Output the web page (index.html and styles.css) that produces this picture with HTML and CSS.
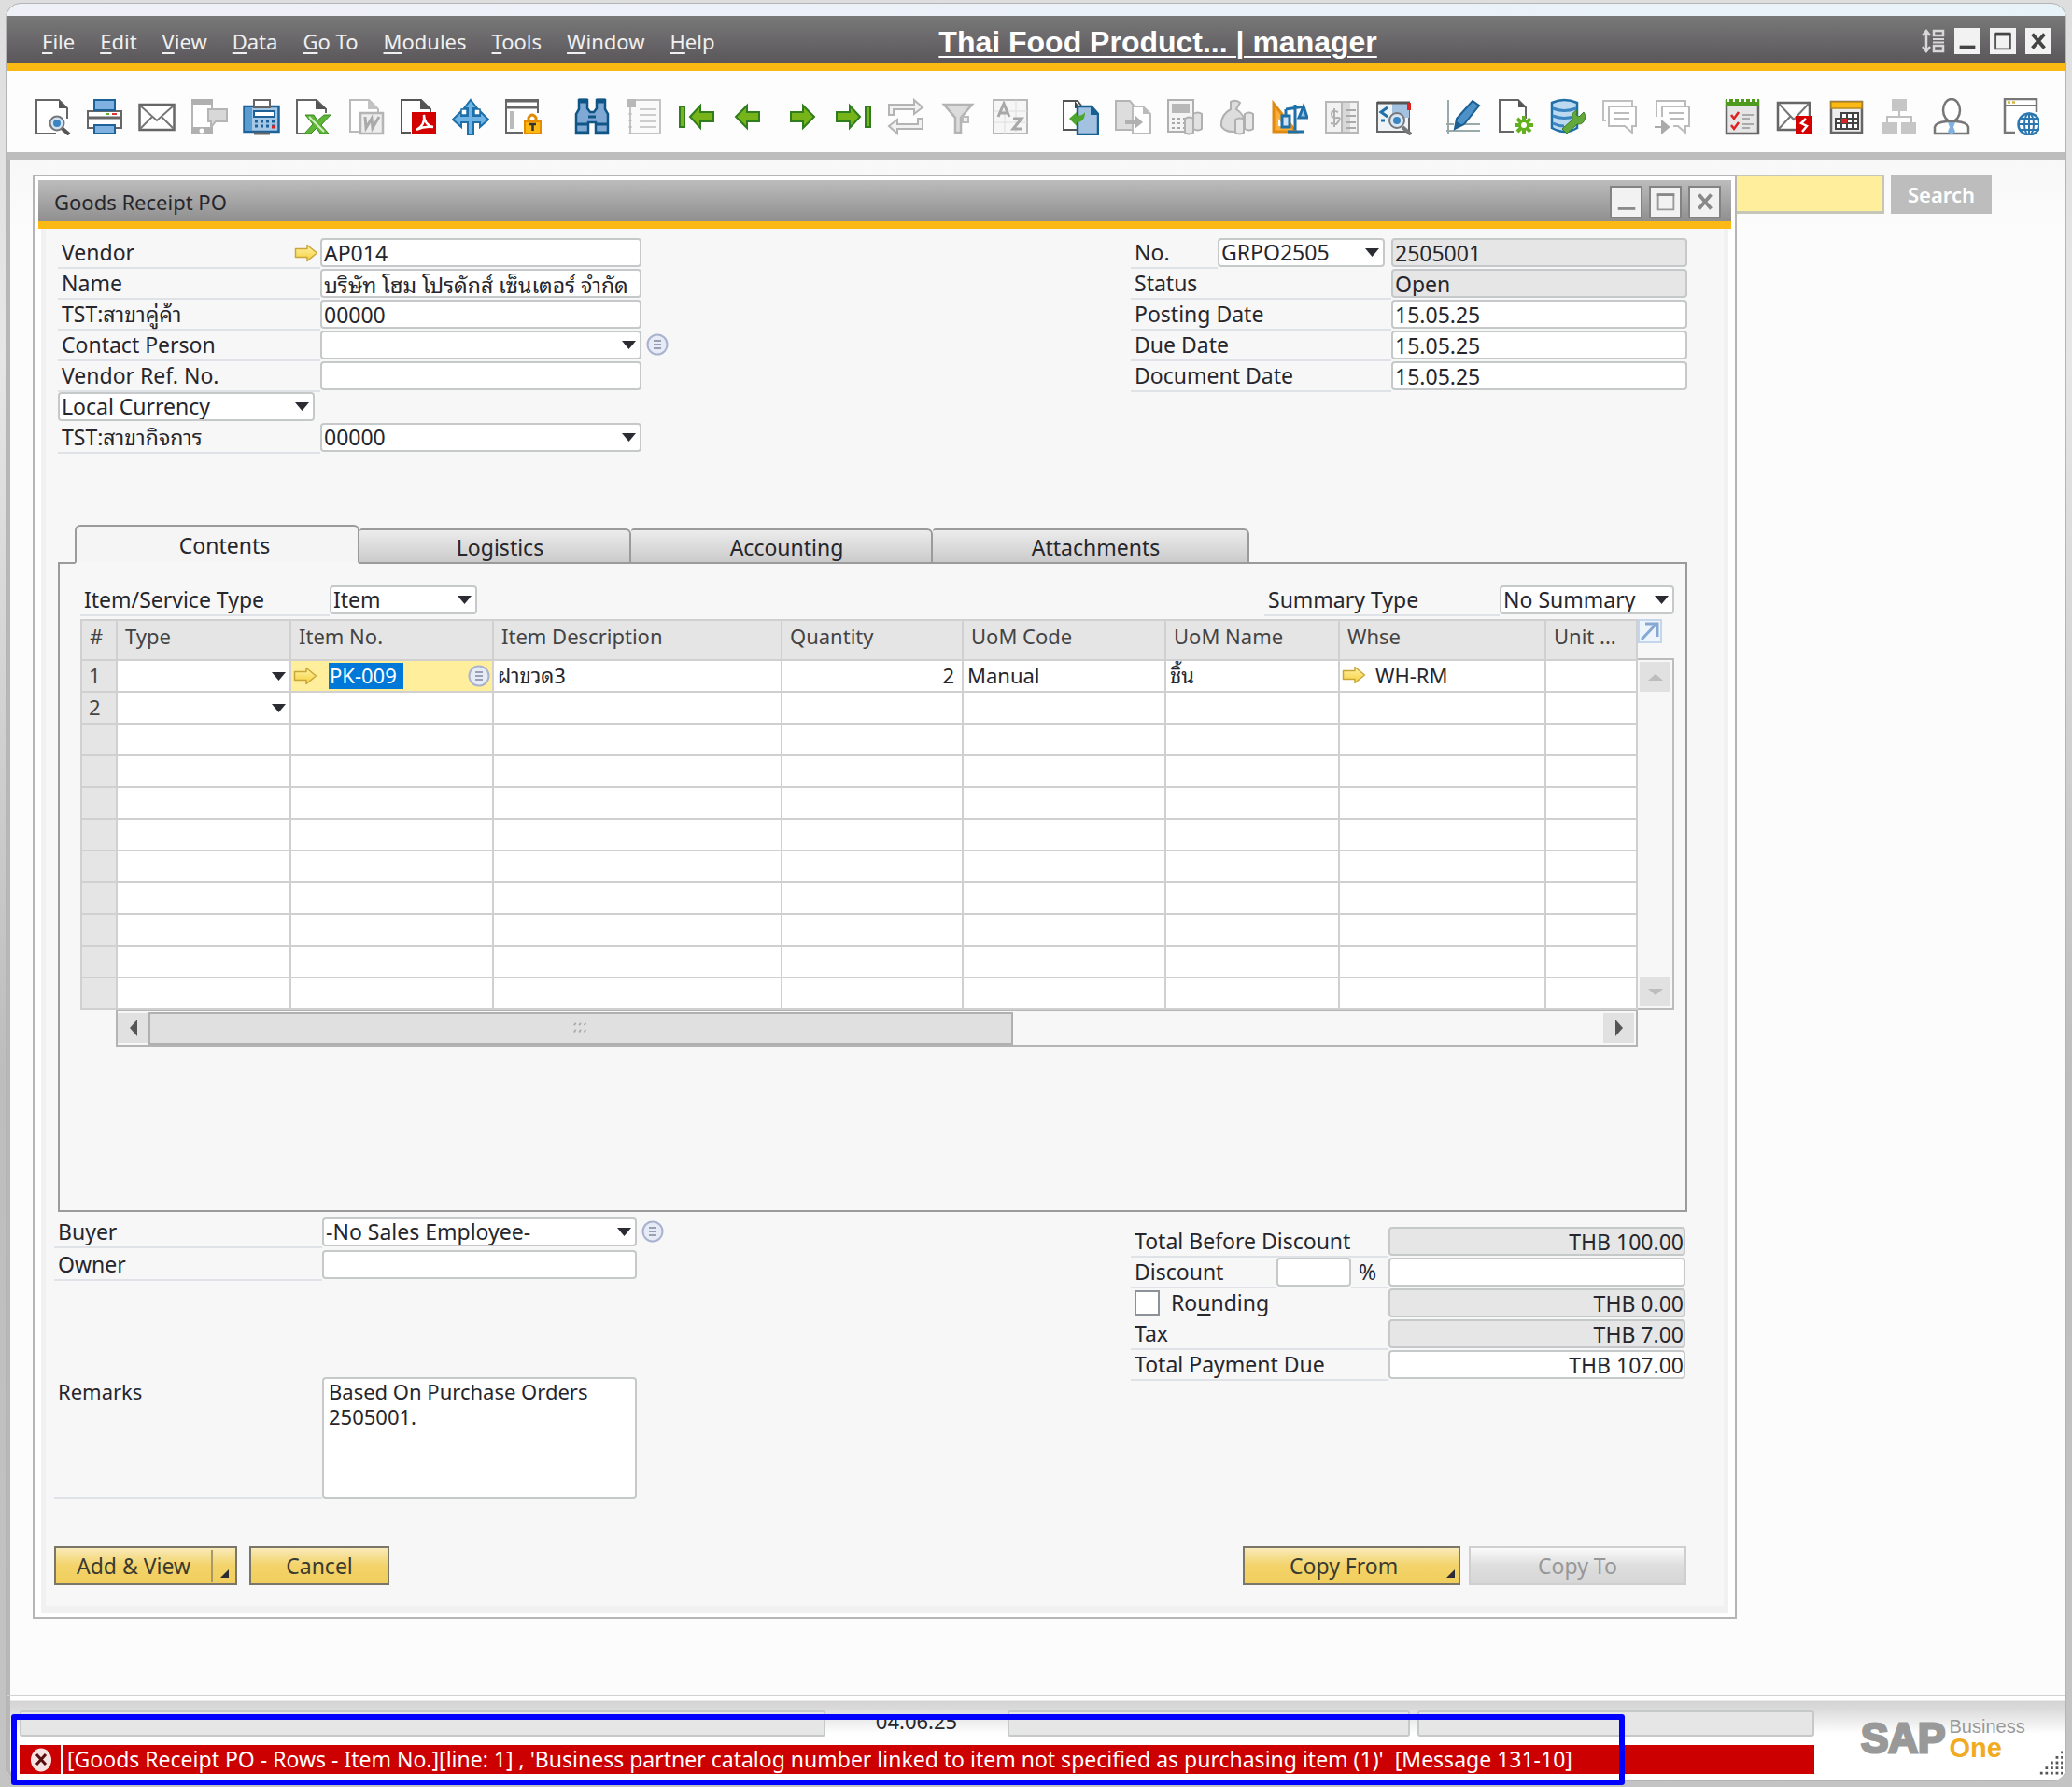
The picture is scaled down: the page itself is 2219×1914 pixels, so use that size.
FILE: index.html
```html
<!DOCTYPE html>
<html lang="en">
<head>
<meta charset="utf-8">
<title>Goods Receipt PO</title>
<link rel="stylesheet" href="styles.css">
</head>
<body>
<svg class="defs" aria-hidden="true">
  <defs>
    <linearGradient id="gold" x1="0" y1="0" x2="0" y2="1"><stop offset="0" stop-color="#fff3a8"/><stop offset="1" stop-color="#f5cf3a"/></linearGradient>
    <symbol id="link-arrow" viewBox="0 0 26 20"><path d="M1.500 5.500H14V1.500L24.500 10 14 18.500V14.500H1.500z" fill="url(#gold)" stroke="#c9a63a" stroke-width="1.500" stroke-linejoin="round"/></symbol>
    <symbol id="list-dot" viewBox="0 0 24 24"><circle cx="12" cy="12" r="10.500" fill="#e6ebf6" stroke="#a9b3cf" stroke-width="2"/><path d="M8 8h8M8 12h8M8 16h8" stroke="#8088a0" stroke-width="1.600"/></symbol>
  </defs>
</svg>
<div class="app">
  <header class="menubar">
    <nav class="menu">
      <a href="#"><u>F</u>ile</a><a href="#"><u>E</u>dit</a><a href="#"><u>V</u>iew</a><a href="#"><u>D</u>ata</a><a href="#"><u>G</u>o To</a><a href="#"><u>M</u>odules</a><a href="#"><u>T</u>ools</a><a href="#"><u>W</u>indow</a><a href="#"><u>H</u>elp</a>
    </nav>
    <h1 class="company">Thai Food Product... | manager</h1>
    <div class="win-buttons">
      <svg class="fit" viewBox="0 0 26 26"><path d="M6 3v20M2 7l4-5 4 5M2 19l4 5 4-5" fill="none" stroke="#d8d8d8" stroke-width="2.500"/><path d="M14 2h10v5H14zM14 18h10v6H14z" fill="none" stroke="#d8d8d8" stroke-width="2.500"/><path d="M13 11h12M13 14.500h12" stroke="#d8d8d8" stroke-width="2"/></svg>
      <button class="win main" aria-label="Minimize"><svg viewBox="0 0 28 28"><path d="M5 21h18" stroke="#444" stroke-width="4"/></svg></button>
      <button class="win main" aria-label="Maximize"><svg viewBox="0 0 28 28"><path d="M5.500 6h17v17h-17z" fill="none" stroke="#555" stroke-width="2"/><path d="M5 6h18" stroke="#444" stroke-width="4"/></svg></button>
      <button class="win main" aria-label="Close"><svg viewBox="0 0 28 28"><path d="M7 6l14 16M21 6L7 22" stroke="#444" stroke-width="4"/></svg></button>
    </div>
  </header>

  <div class="toolbar">
    <div class="tools">
      <button aria-label="Preview"><svg viewBox="0 0 40 40"><path d="M24 38H3V2h24l9 9v11" fill="#fff" stroke="#666" stroke-width="2"/><path d="M27 2v9h9z" fill="#555"/><path d="M30 32l8 7" stroke="#555" stroke-width="4"/><circle cx="25" cy="27" r="7.500" fill="#cfe3f5" stroke="#777" stroke-width="2"/><circle cx="25" cy="27" r="4" fill="#3a85c0"/></svg></button>
      <button aria-label="Print"><svg viewBox="0 0 40 40"><path d="M2 14h36v18H2z" fill="#fff" stroke="#666" stroke-width="2"/><path d="M1 21h38" stroke="#666" stroke-width="3"/><path d="M9 2h22v11H9zM9 29h22v9H9z" fill="#7fb2e0" stroke="#1c6197" stroke-width="2"/><path d="M22 17h3" stroke="#5ab02e" stroke-width="2"/><path d="M28 17h5" stroke="#d33" stroke-width="2"/></svg></button>
      <button aria-label="Email"><svg viewBox="0 0 40 40"><path d="M1.500 7h37v27h-37z" fill="#fff" stroke="#666" stroke-width="2.500"/><path d="M2 8l18 16L38 8M2 33l13-13M38 33L25 20" fill="none" stroke="#777" stroke-width="2"/></svg></button>
      <button aria-label="SMS"><svg viewBox="0 0 40 40"><path d="M2 2h21v36H2z" fill="#fff" stroke="#b5b5b5" stroke-width="2"/><path d="M1 1h23v6H1zM1 31h23v8H1z" fill="#b0b0b0"/><circle cx="12" cy="35" r="2.500" fill="#fff"/><path d="M19 12h20v13H27l-5 6v-6h-3z" fill="#d8d8d8" stroke="#b5b5b5" stroke-width="2"/></svg></button>
      <button aria-label="Fax"><svg viewBox="0 0 40 40"><path d="M1.500 9h37v27h-37z" fill="#a4c8e6" stroke="#1c6197" stroke-width="2.500"/><path d="M2 10h8v25H2z" fill="#5a9bd0"/><path d="M12 2h17v8H12z" fill="#fff" stroke="#666" stroke-width="2"/><path d="M12 14h22v6H12z" fill="#fff" stroke="#1c6197" stroke-width="2"/><path d="M13 25h21M13 30h21" stroke="#1c6197" stroke-width="3" stroke-dasharray="3 3"/><path d="M31 31h4" stroke="#d22" stroke-width="3"/><path d="M12 38h17" stroke="#666" stroke-width="3"/></svg></button>
      <button aria-label="Export to Excel"><svg viewBox="0 0 40 40"><path d="M14 38H2V2h21l10 10v4" fill="#fff" stroke="#666" stroke-width="2"/><path d="M22 2v10h12z" fill="#555"/><path d="M11 18h9l4 6 7-6h7L28 29l8 9h-9l-4-6-6 6h-7l9-10z" fill="#5fb536" stroke="#3a8a24"/><path d="M15 20l16 16" stroke="#d4efc4" stroke-width="2"/></svg></button>
      <button aria-label="Export to Word"><svg viewBox="0 0 40 40"><path d="M14 36H3V2h20l10 10v3" fill="#fff" stroke="#bbb" stroke-width="2"/><path d="M22 2v10h12z" fill="#c4c4c4"/><path d="M14 16h24v22H14z" fill="#eee" stroke="#b5b5b5" stroke-width="2.500"/><path d="M19 20l1 12 6-10 1 10 7-12" fill="none" stroke="#aaa" stroke-width="3"/></svg></button>
      <button aria-label="Export to PDF"><svg viewBox="0 0 40 40"><path d="M12 37H2V2h21l10 10v3" fill="#fff" stroke="#555" stroke-width="2"/><path d="M22 2v10h12z" fill="#555"/><path d="M13 15h26v24H13z" fill="#d40000"/><path d="M18 34c6-3 9-9 8-16 0 7 4 12 10 13-7-1-12 0-18 3z" fill="none" stroke="#fff" stroke-width="2.500"/></svg></button>
      <button aria-label="Launch application"><svg viewBox="0 0 40 40"><path d="M20 2l7 9h-4v8h7v-5l9 9-9 8v-5h-7v13h-6V26h-7v5l-9-8 9-9v5h7v-8h-4z" fill="#6fb4e4" stroke="#1f6fa8" stroke-width="2"/><path d="M10 12h6v6h-6zM24 12h6v6h-6z" fill="#fff" stroke="#1f6fa8" stroke-width="1.500"/></svg></button>
      <button aria-label="Lock screen"><svg viewBox="0 0 40 40"><path d="M20 37H2V2h34v14" fill="#fff" stroke="#666" stroke-width="2"/><path d="M1 3h36M1 10h36" stroke="#666" stroke-width="3"/><path d="M8 14v19" stroke="#bbb" stroke-width="4"/><path d="M26 25v-4q4-6 8 0v4" fill="none" stroke="#e08a00" stroke-width="3"/><path d="M22 25h17v13H22z" fill="#fdb913" stroke="#e88a00" stroke-width="2"/><path d="M27 28h7M30.500 28v7" stroke="#333" stroke-width="2.500"/></svg></button>
    </div>
    <div class="tools">
      <button aria-label="Find"><svg viewBox="0 0 40 40"><path d="M6 2h9v9l3 4h4l3-4V2h9v10l3 5v21H24V26h-8v12H3V17l3-5z" fill="#7fa9d4" stroke="#0f5585" stroke-width="2.500"/><path d="M6 3h9M25 3h9" stroke="#0f5585" stroke-width="5"/><path d="M3 28h13M24 28h13M3 37h13M24 37h13M16 20h8" stroke="#0f5585" stroke-width="3"/></svg></button>
      <button aria-label="Add"><svg viewBox="0 0 40 40"><path d="M5 2h32v36H5z" fill="#fafafa" stroke="#c4c4c4" stroke-width="2"/><path d="M2 1h9v9H2z" fill="#b8b8b8"/><path d="M5 16v22" stroke="#bbb" stroke-width="3" stroke-dasharray="2 5"/><path d="M15 12h18M15 18h18M15 25h18M15 31h18" stroke="#ccc" stroke-width="2"/></svg></button>
      <button aria-label="First record"><svg viewBox="0 0 40 40"><path d="M2 9h5v22H2z" fill="#7ab51d" stroke="#2f7d1e" stroke-width="2"/><path d="M13 20l11-12v7h14v10H24v7z" fill="#76b41a" stroke="#2f7d1e" stroke-width="2"/></svg></button>
      <button aria-label="Previous record"><svg viewBox="0 0 40 40"><path d="M6 20L18 8v7h13v10H18v7z" fill="#76b41a" stroke="#2f7d1e" stroke-width="2"/></svg></button>
      <button aria-label="Next record"><svg viewBox="0 0 40 40"><path d="M34 20L22 8v7H9v10h13v7z" fill="#76b41a" stroke="#2f7d1e" stroke-width="2"/></svg></button>
      <button aria-label="Last record"><svg viewBox="0 0 40 40"><path d="M33 9h5v22h-5z" fill="#7ab51d" stroke="#2f7d1e" stroke-width="2"/><path d="M27 20L16 8v7H2v10h14v7z" fill="#76b41a" stroke="#2f7d1e" stroke-width="2"/></svg></button>
      <button aria-label="Refresh"><svg viewBox="0 0 40 40"><path d="M2 18V7h27V2l9 8-9 7v-5H7v6zM38 22v11H11v5l-9-8 9-7v5h22v-6z" fill="#f2f2f2" stroke="#b4b4b4" stroke-width="2"/></svg></button>
      <button aria-label="Filter"><svg viewBox="0 0 40 40"><path d="M5 7h30L23 21v16h-6V21z" fill="#dcdcdc" stroke="#b4b4b4" stroke-width="2.500"/><path d="M25 20h6v6h-6z" fill="#eee" stroke="#bbb" stroke-width="2"/></svg></button>
      <button aria-label="Sort"><svg viewBox="0 0 40 40"><path d="M2 2h36v36H2z" fill="#f6f6f6" stroke="#b8b8b8" stroke-width="2"/><path d="M2 14h36M2 26h36M14 2v36M26 2v36" stroke="#dedede"/><path d="M7 20l6-14 6 14M9 16h8M23 22h9l-9 11h10" fill="none" stroke="#a8a8a8" stroke-width="3"/></svg></button>
    </div>
    <div class="tools">
      <button aria-label="Base document"><svg viewBox="0 0 40 40"><path d="M16 34H2V3h15l4 5" fill="#fff" stroke="#555" stroke-width="2"/><path d="M14 3v8h6z" fill="#444"/><path d="M17 9h15l7 8v22H17z" fill="#a3c1e0" stroke="#155f91" stroke-width="2.500"/><path d="M31 8v10h8z" fill="#155f91"/><path d="M8 22l8-7v4c4 0 7-1 9-4 0 7-3 11-9 11v4z" fill="#4ca52c"/></svg></button>
      <button aria-label="Target document"><svg viewBox="0 0 40 40"><path d="M2 3h15l6 7v24H2z" fill="#ddd" stroke="#b5b5b5" stroke-width="2"/><path d="M20 9h11l8 8v21H20z" fill="#fff" stroke="#bbb" stroke-width="2"/><path d="M31 9v8h8z" fill="#bbb"/><path d="M12 24h10v-6l9 8-9 7v-5H12z" fill="#b0b0b0"/></svg></button>
      <button aria-label="Gross profit"><svg viewBox="0 0 40 40"><path d="M2 2h27v34H2z" fill="#f4f4f4" stroke="#b0b0b0" stroke-width="2"/><path d="M6 6h19v10H6z" fill="#b8b8b8"/><path d="M6 22h14M6 27h14M6 32h14" stroke="#a8a8a8" stroke-width="2" stroke-dasharray="3 3"/><path d="M29 17q5-3 9 0v16q-4 3-9 0zM20 22q5-3 9 0v15q-4 3-9 0z" fill="#e2e2e2" stroke="#b0b0b0" stroke-width="2"/></svg></button>
      <button aria-label="Payment means"><svg viewBox="0 0 40 40"><path d="M13 4q6-3 10 1l-4 7q10 6 9 18-4 6-13 6T3 30Q2 18 13 12z" fill="#ddd" stroke="#b0b0b0" stroke-width="2"/><path d="M28 17q5-3 9 0v16q-4 3-9 0zM18 23q5-3 9 0v14q-4 3-9 0z" fill="#e6e6e6" stroke="#b0b0b0" stroke-width="2"/></svg></button>
      <button aria-label="Volume and weight"><svg viewBox="0 0 40 40"><path d="M3 6l24 30H3z" fill="#fbb03b" stroke="#e08a12" stroke-width="3"/><path d="M8 22l6 8H8z" fill="#fff"/><path d="M12 19h8v12h-8z" fill="#cfe3f5" stroke="#1f6fa8" stroke-width="3"/><path d="M26 7v27M18 36h17M16 12l20-3M35 9l-5 12h9zM16 12v7" fill="#9cc4e4" stroke="#1f6fa8" stroke-width="3"/></svg></button>
      <button aria-label="Transaction journal"><svg viewBox="0 0 40 40"><path d="M3 4h17v33H3zM20 4h17v33H20z" fill="#f2f2f2" stroke="#b8b8b8" stroke-width="2"/><path d="M21 5h8v31h-8z" fill="#d8d8d8"/><path d="M24 13h11M24 19h11M24 26h11M24 32h11" stroke="#aaa" stroke-width="2"/><path d="M16 15q-7-3-7 2t6 4-1 7l-6-1M12 11v20" fill="none" stroke="#b0b0b0" stroke-width="2"/></svg></button>
      <button aria-label="Layout designer"><svg viewBox="0 0 40 40"><path d="M2 5h34v31H2z" fill="#eef3f8" stroke="#666" stroke-width="2"/><path d="M18 5h18v16H18z" fill="#a3c1e0"/><path d="M2 5h35" stroke="#555" stroke-width="3"/><path d="M34 5h4v8h-4z" fill="#d22"/><path d="M13 10l-7 5 7 5M6 24h4" fill="none" stroke="#1f6fa8" stroke-width="3"/><path d="M29 31l9 8" stroke="#777" stroke-width="4"/><circle cx="23" cy="24" r="8" fill="#d7e7f5" stroke="#777" stroke-width="2"/><circle cx="23" cy="24" r="4" fill="#3a85c0"/></svg></button>
    </div>
    <div class="tools">
      <button aria-label="Edit form"><svg viewBox="0 0 40 40"><path d="M4 2v36M2 35h36M2 28h8M22 28h16" stroke="#9aa" stroke-width="2"/><path d="M30 3l7 5-16 20-10 5 2-11z" fill="#4c92c8" stroke="#1c5f92" stroke-width="2"/><path d="M11 33l2-8 6 4z" fill="#1c5f92"/></svg></button>
      <button aria-label="Form settings"><svg viewBox="0 0 40 40"><path d="M18 36H3V2h20l8 8v12" fill="#fff" stroke="#666" stroke-width="2"/><path d="M23 2v8h8z" fill="#555"/><path d="M29 19v20M19 29h20M22 22l14 14M36 22L22 36" stroke="#62b01e" stroke-width="4"/><circle cx="29" cy="29" r="6" fill="#62b01e"/><circle cx="29" cy="29" r="3" fill="#fff"/></svg></button>
      <button aria-label="Query manager"><svg viewBox="0 0 40 40"><path d="M3 5q13-6 27 0v27q-13 8-27 0z" fill="#bcd9f2" stroke="#1f6fa8" stroke-width="2.500"/><path d="M4 11q12 5 25 0M4 19q12 5 25 0M4 27q6 3 12 3" stroke="#3a85c0" stroke-width="3" fill="none"/><path d="M37 15l-5 5-3-2 1-5q-7 2-5 10L14 33l5 5 11-10q8 1 9-9z" fill="#62a83a" stroke="#3b7d28"/></svg></button>
      <button aria-label="Message alerts"><svg viewBox="0 0 40 40"><path d="M5 24H2V3h31v5" fill="none" stroke="#c0c0c0" stroke-width="2"/><path d="M8 9h29v21h-4v7l-8-7H8z" fill="#fff" stroke="#bbb" stroke-width="2"/><path d="M14 16h16M14 22h16" stroke="#bbb" stroke-width="2"/></svg></button>
      <button aria-label="Forward message"><svg viewBox="0 0 40 40"><path d="M3 20V3h31v5M9 20V9h29v21h-4v7l-8-7h-5" fill="#fff" stroke="#bbb" stroke-width="2"/><path d="M16 16h16M18 22h14" stroke="#bbb" stroke-width="2"/><path d="M1 31h8v-6l7 6-7 6v-6" fill="#aaa" stroke="#aaa" stroke-width="2"/></svg></button>
    </div>
    <div class="tools">
      <button aria-label="Activities"><svg viewBox="0 0 40 40"><path d="M3 3h34v35H3z" fill="#e6e6e6" stroke="#666" stroke-width="2.500"/><path d="M2 1h36v7H2z" fill="#4e9a1e"/><path d="M5 0v4M11 0v4M17 0v4M23 0v4M29 0v4M35 0v4" stroke="#fff" stroke-width="2"/><path d="M8 18l3 4 5-7M8 29l3 4 5-7" fill="none" stroke="#d22" stroke-width="2.500"/><path d="M20 18h12M20 22h8M20 28h12M20 32h8" stroke="#aaa" stroke-width="2"/></svg></button>
      <button aria-label="Mail alert"><svg viewBox="0 0 40 40"><path d="M2 5h34v29H2z" fill="#fff" stroke="#666" stroke-width="2.500"/><path d="M3 6l16 17L35 6M3 33l12-13" fill="none" stroke="#777" stroke-width="2"/><path d="M21 19h18v20H21z" fill="#d40000"/><path d="M32 22l-5 5 6 3-5 6" fill="none" stroke="#fff" stroke-width="2.500"/></svg></button>
      <button aria-label="Calendar"><svg viewBox="0 0 40 40"><path d="M3 4h33v33H3z" fill="#eee" stroke="#666" stroke-width="2.500"/><path d="M3 4h33v7H3z" fill="#fdb913" stroke="#b88a20" stroke-width="1.500"/><path d="M14 16h18v17H8V22h6z" fill="#fff" stroke="#444" stroke-width="2"/><path d="M8 27h24M14 22h18M14 16v17M20 16v17M26 16v17" stroke="#444" stroke-width="2"/><path d="M14 22h6v5h-6z" fill="#d22"/></svg></button>
      <button aria-label="Org chart"><svg viewBox="0 0 40 40"><path d="M12 1h16v13H12zM2 26h16v12H2zM22 26h16v12H22z" fill="#c6c6c6"/><path d="M20 14v6M7 26v-6h26v6" fill="none" stroke="#c0c0c0" stroke-width="2"/></svg></button>
      <button aria-label="User"><svg viewBox="0 0 40 40"><path d="M2 38v-7q1-5 13-6h10q12 1 13 6v7z" fill="#fff" stroke="#777" stroke-width="2.500"/><path d="M16 26h8l-2 5 2 5-4 3-4-3 2-5z" fill="#7fb2e0"/><ellipse cx="20" cy="13" rx="9" ry="12" fill="#fff" stroke="#777" stroke-width="2.500"/></svg></button>
    </div>
    <div class="tools">
      <button aria-label="Browser access"><svg viewBox="0 0 40 40"><path d="M14 37H3V1h34v14" fill="#fff" stroke="#777" stroke-width="2.500"/><path d="M3 8h34" stroke="#777" stroke-width="2"/><path d="M6 4.500h3M11 4.500h3" stroke="#d6b840" stroke-width="2.500"/><circle cx="29" cy="28" r="11.500" fill="#fff" stroke="#2b78b0" stroke-width="2.500"/><ellipse cx="29" cy="28" rx="5" ry="11.500" fill="none" stroke="#2b78b0" stroke-width="2"/><path d="M18 28h22M29 17v23M20 22h18M20 34h18" stroke="#2b78b0" stroke-width="2"/></svg></button>
    </div>
  </div>

  <main class="workspace">
    <section class="window">
      <header class="titlebar">
        <h2>Goods Receipt PO</h2>
        <div class="win-buttons">
          <button class="win" aria-label="Minimize"><svg viewBox="0 0 28 28"><path d="M4 22h20" stroke="#888" stroke-width="3"/></svg></button>
          <button class="win" aria-label="Maximize"><svg viewBox="0 0 28 28"><path d="M5 6h18v17H5z" fill="none" stroke="#999" stroke-width="2"/><path d="M4 6h20" stroke="#888" stroke-width="3"/></svg></button>
          <button class="win" aria-label="Close"><svg viewBox="0 0 28 28"><path d="M7 6l14 16M21 6L7 22" stroke="#888" stroke-width="4"/></svg></button>
        </div>
      </header>
      <form class="body">
        <div class="head">
          <div class="fields">
            <div class="row"><label class="lbl" for="vendor">Vendor<svg class="arrow"><use href="#link-arrow"/></svg></label><input class="field" id="vendor" value="AP014"></div>
            <div class="row"><label class="lbl" for="name">Name</label><input class="field thai" id="name" value="บริษัท โฮม โปรดักส์ เซ็นเตอร์ จำกัด"></div>
            <div class="row"><label class="lbl" for="branch">TST:สาขาคู่ค้า</label><input class="field" id="branch" value="00000"></div>
            <div class="row"><label class="lbl" for="contact">Contact Person</label><select class="field" id="contact"><option></option></select><svg class="dot"><use href="#list-dot"/></svg></div>
            <div class="row"><label class="lbl" for="ref">Vendor Ref. No.</label><input class="field" id="ref"></div>
            <div class="row"><select class="field currency" aria-label="Currency"><option>Local Currency</option></select></div>
            <div class="row"><label class="lbl" for="own-branch">TST:สาขากิจการ</label><select class="field" id="own-branch"><option>00000</option></select></div>
          </div>
          <div class="fields docs">
            <div class="row"><label class="lbl short" for="series">No.</label><select class="field series" id="series"><option>GRPO2505</option></select><input class="field off" aria-label="Document number" value="2505001" readonly></div>
            <div class="row"><label class="lbl" for="status">Status</label><input class="field off" id="status" value="Open" readonly></div>
            <div class="row"><label class="lbl" for="posting">Posting Date</label><input class="field" id="posting" value="15.05.25"></div>
            <div class="row"><label class="lbl" for="due">Due Date</label><input class="field" id="due" value="15.05.25"></div>
            <div class="row"><label class="lbl" for="docdate">Document Date</label><input class="field" id="docdate" value="15.05.25"></div>
          </div>
        </div>

        <div class="tabs" role="tablist">
          <button type="button" role="tab" class="tab active" aria-selected="true">Contents</button>
          <button type="button" role="tab" class="tab logistics">Logistics</button>
          <button type="button" role="tab" class="tab accounting">Accounting</button>
          <button type="button" role="tab" class="tab attachments">Attachments</button>
        </div>
        <div class="panel" role="tabpanel">
          <div class="types">
            <div class="row"><label class="lbl item-lbl" for="itype">Item/Service Type</label><select class="field itype" id="itype"><option>Item</option></select></div>
            <div class="row"><label class="lbl sum-lbl" for="stype">Summary Type</label><select class="field stype" id="stype"><option>No Summary</option></select></div>
          </div>
          <div class="gridwrap">
            <table class="items">
              <colgroup><col class="c-num"><col class="c-type"><col class="c-item"><col><col class="c-qty"><col class="c-uomc"><col class="c-uomn"><col class="c-whse"><col class="c-unit"></colgroup>
              <thead><tr><th>#</th><th>Type</th><th>Item No.</th><th>Item Description</th><th>Quantity</th><th>UoM Code</th><th>UoM Name</th><th>Whse</th><th>Unit ...</th></tr></thead>
              <tbody>
                <tr><td>1</td><td class="pick"><select aria-label="Type, row 1"><option></option></select></td><td class="current"><div class="cell"><svg class="arrow"><use href="#link-arrow"/></svg><input class="selected" aria-label="Item number" value="PK-009"><svg class="dot"><use href="#list-dot"/></svg></div></td><td>ฝาขวด3</td><td class="num">2</td><td>Manual</td><td>ชิ้น</td><td class="pick"><div class="cell whse"><svg class="arrow"><use href="#link-arrow"/></svg>WH-RM</div></td><td></td></tr>
                <tr><td>2</td><td class="pick"><select aria-label="Type, row 2"><option></option></select></td><td></td><td></td><td></td><td></td><td></td><td></td><td></td></tr>
                <tr><td></td><td></td><td></td><td></td><td></td><td></td><td></td><td></td><td></td></tr>
                <tr><td></td><td></td><td></td><td></td><td></td><td></td><td></td><td></td><td></td></tr>
                <tr><td></td><td></td><td></td><td></td><td></td><td></td><td></td><td></td><td></td></tr>
                <tr><td></td><td></td><td></td><td></td><td></td><td></td><td></td><td></td><td></td></tr>
                <tr><td></td><td></td><td></td><td></td><td></td><td></td><td></td><td></td><td></td></tr>
                <tr><td></td><td></td><td></td><td></td><td></td><td></td><td></td><td></td><td></td></tr>
                <tr><td></td><td></td><td></td><td></td><td></td><td></td><td></td><td></td><td></td></tr>
                <tr><td></td><td></td><td></td><td></td><td></td><td></td><td></td><td></td><td></td></tr>
                <tr><td></td><td></td><td></td><td></td><td></td><td></td><td></td><td></td><td></td></tr>
              </tbody>
            </table>
            <div class="side">
              <button type="button" class="expand" aria-label="Expand table"><svg viewBox="0 0 26 26"><path d="M1 1h24v24H1z" fill="#eef4fb" stroke="#c3d6ec" stroke-width="2"/><path d="M4 22L19 6M8 5h13v14" fill="none" stroke="#86a8d2" stroke-width="3"/></svg></button>
              <div class="vscroll">
                <button type="button" aria-label="Scroll up"><svg viewBox="0 0 20 10"><path d="M1 9l9-8 9 8z" fill="#bdbdbd"/></svg></button>
                <button type="button" aria-label="Scroll down"><svg viewBox="0 0 20 10"><path d="M1 1l9 8 9-8z" fill="#bdbdbd"/></svg></button>
              </div>
            </div>
          </div>
          <div class="hscroll">
            <button type="button" aria-label="Scroll left"><svg viewBox="0 0 8 18"><path d="M8 0v18L0 9z" fill="#555"/></svg></button>
            <div class="thumb"><svg viewBox="0 0 18 14"><path d="M1 4l2-3M7 4l2-3M13 4l2-3M1 12l2-3M7 12l2-3M13 12l2-3" stroke="#aaa" stroke-width="2"/></svg></div>
            <button type="button" aria-label="Scroll right"><svg viewBox="0 0 8 18"><path d="M0 0v18l8-9z" fill="#555"/></svg></button>
          </div>
        </div>

        <div class="foot">
          <div class="people">
            <div class="row"><label class="lbl" for="buyer">Buyer</label><select class="field" id="buyer"><option>-No Sales Employee-</option></select><svg class="dot"><use href="#list-dot"/></svg></div>
            <div class="row"><label class="lbl" for="owner">Owner</label><input class="field" id="owner"></div>
            <div class="row remarks"><label class="lbl" for="remarks">Remarks</label><textarea class="field" id="remarks">Based On Purchase Orders 2505001.</textarea></div>
          </div>
          <div class="totals">
            <div class="row"><label class="lbl" for="before">Total Before Discount</label><input class="field off" id="before" value="THB 100.00" readonly></div>
            <div class="row"><label class="lbl disc" for="discount">Discount</label><input class="field pct" id="discount"><span class="lbl unit">%</span><input class="field" aria-label="Discount amount"></div>
            <div class="row"><div class="lbl bare"><input type="checkbox" id="rounding"><label for="rounding">Ro<u>u</u>nding</label></div><input class="field off" aria-label="Rounding amount" value="THB 0.00" readonly></div>
            <div class="row"><label class="lbl" for="tax">Tax</label><input class="field off" id="tax" value="THB 7.00" readonly></div>
            <div class="row"><label class="lbl" for="total">Total Payment Due</label><input class="field" id="total" value="THB 107.00"></div>
          </div>
        </div>
        <div class="actions">
          <button type="button" class="btn split"><span>Add &amp; View</span></button>
          <button type="button" class="btn cancel">Cancel</button>
          <button type="button" class="btn copy more">Copy From</button>
          <button type="button" class="btn copy" disabled>Copy To</button>
        </div>
      </form>
    </section>
    <form class="search"><input aria-label="Search text"><button type="button">Search</button></form>
  </main>

  <footer class="statusbar">
    <div class="status">
      <div class="boxes"><span class="box wide"></span><time>04.06.25</time><span class="box mid"></span><span class="box mid"></span></div>
      <div class="error" role="alert"><svg viewBox="0 0 24 26"><ellipse cx="12" cy="13" rx="11" ry="12.500" fill="#f6e4e2"/><path d="M7 7l10 11M17 7L7 18" stroke="#5a1010" stroke-width="3"/></svg><p>[Goods Receipt PO - Rows - Item No.][line: 1] , 'Business partner catalog number linked to item not specified as purchasing item (1)'&nbsp; [Message 131-10]</p></div>
    </div>
    <div class="logo"><b>SAP</b><div><span>Business</span><strong>One</strong></div></div>
    <svg class="grip" viewBox="0 0 28 28"><path d="M2 26h26M8 20h20M14 14h14M20 8h8M26 2h2" stroke="#555" stroke-width="3" stroke-dasharray="3 3"/></svg>
    <div class="marker"></div>
  </footer>
</div>
</body>
</html>
```
FILE: styles.css
```css
* { box-sizing: border-box; }
body {
  margin: 0;
  padding: 3px 6px 6px;
  min-height: 100vh;
  display: flex;
  background: linear-gradient(#dedede, #e6e6e6 20%, #bdbdbd 60%, #c4c4c4);
  font: 22px/27px "Noto Sans", "Noto Sans Thai Looped", "Noto Looped Thai", Waree, Loma, Garuda, "Open Sans", sans-serif;
  color: #26262c;
}
button, input, select, textarea { font: inherit; color: inherit; margin: 0; padding: 0; border: 0; border-radius: 0; outline: 0; }
h1, h2, p { margin: 0; font: inherit; }
svg { display: block; flex: none; }
.defs { position: absolute; width: 0; height: 0; }

.app {
  flex: 1;
  min-width: 0;
  display: flex;
  flex-direction: column;
  padding-top: 13px;
  border: 1px solid #b4b4b4;
  border-radius: 16px 16px 14px 14px;
  background: linear-gradient(90deg, #f0f0f8, #e8f3f9);
}

/* main menu */
.menubar {
  display: flex;
  align-items: center;
  height: 59px;
  padding: 2px 15px 0 38px;
  border-bottom: 8px solid #fdb913;
  background: linear-gradient(#797979, #5a565a);
  color: #f0f0f0;
}
.menu { display: flex; flex: 960 0 0; gap: 27px; }
.menu a { color: inherit; text-decoration: none; line-height: 30px; }
u { text-underline-offset: 3px; text-decoration-thickness: 2px; }
.company { padding-top: 2px; font: bold 32px/36px "Liberation Sans", Arial, sans-serif; color: #fff; text-decoration: underline; text-decoration-thickness: 2px; text-underline-offset: 4px; }
.win-buttons { display: flex; gap: 10px; align-items: center; }
.menubar .win-buttons { flex: 722 0 0; justify-content: flex-end; }
.fit { width: 26px; height: 26px; }
.win { width: 35px; height: 35px; border: 2px solid #838383; background: #f2f2f2; display: grid; place-items: center; }
.win svg { width: 26px; height: 26px; }
.win.main { width: 28px; height: 28px; border: 0; }

.toolbar {
  display: flex;
  justify-content: space-between;
  align-items: center;
  height: 95px;
  padding: 10px 28px 0 29px;
  border-bottom: 8px solid #bdbdbd;
  background: #fdfdfd;
}
.tools { display: flex; gap: 16px; }
.tools button { background: none; }
.tools svg { width: 40px; height: 40px; }

/* workspace */
.workspace {
  flex: 1;
  display: grid;
  grid-template-columns: minmax(0, 1fr) 352px;
  align-items: start;
  padding: 16px 0 40px 24px;
  border-left: 4px solid #b8b8b8;
  background: linear-gradient(#f8f8f8, #fcfcfc 80px);
}
.window { border: 2px solid #b5b5b5; padding: 4px; background: #fff; }
.titlebar {
  display: flex;
  justify-content: space-between;
  align-items: center;
  height: 52px;
  padding: 2px 11px 0 17px;
  border-bottom: 8px solid #fdb913;
  background: linear-gradient(#bcbcbc, #8f8f8f);
}
.titlebar .win-buttons { gap: 7px; }
.search { display: flex; gap: 7px; height: 42px; padding-right: 24px; }
.search input { width: 158px; background: #ffee9c; border: solid #c4c7b8; border-width: 2px 2px 3px 0; }
.search button { width: 108px; background: #bdbdbd; color: #fff; font-weight: 600; }

.body {
  margin: 0 3px;
  padding: 10px 39px 22px 13px;
  border: solid #f1f1f1;
  border-width: 0 5px 8px;
  background: #f7f7f7;
  font-size: 23px;
}
.head { display: flex; justify-content: space-between; }
.row { display: flex; height: 33px; align-items: flex-start; }
.lbl {
  display: flex;
  justify-content: space-between;
  align-items: center;
  width: 281px;
  height: 33px;
  padding: 0 2px 0 4px;
  border-bottom: 2px solid #dfe2e7;
  white-space: nowrap;
}
.field {
  width: 344px;
  height: 31px;
  padding: 0 2px;
  border: 2px solid #c6c9c9;
  border-radius: 4px;
  background-color: #fff;
}
.field.off { background-color: #e6e6e6; }
select {
  appearance: none;
  background: #fff url("data:image/svg+xml,%3Csvg xmlns='http://www.w3.org/2000/svg' width='15' height='9'%3E%3Cpath d='M0 0h15L7.500 9z' fill='%232b2b33'/%3E%3C/svg%3E") no-repeat right 4px center;
}
.arrow { width: 26px; height: 20px; }
.dot { width: 24px; height: 24px; margin: 3px 0 0 5px; }
.field.currency { width: 275px; }
.docs .lbl { width: 279px; }
.docs .field { width: 317px; }
.docs .short { width: 93px; }
.docs .series { width: 179px; margin-right: 7px; }

/* tabs */
.tabs { display: flex; align-items: flex-end; margin: 76px 0 -2px 18px; }
.tab {
  z-index: 1;
  height: 38px;
  padding: 2px 0 0 12px;
  border: 2px solid #9b9b9b;
  border-left-width: 0;
  border-radius: 3px 6px 0 0;
  background: linear-gradient(#ececec, #cbcbcb);
}
.tab.active { width: 305px; height: 42px; padding-left: 16px; border-left-width: 2px; border-bottom-color: #f7f7f7; border-radius: 6px 6px 0 0; background: #f5f5f5; }
.tab.logistics { width: 291px; }
.tab.accounting { width: 323px; }
.tab.attachments { width: 339px; }
.panel { min-height: 696px; padding: 23px 12px 0 22px; border: 2px solid #9b9b9b; }
.types { display: flex; justify-content: space-between; margin-bottom: 3px; }
.item-lbl { width: 267px; }
.sum-lbl { width: 252px; }
.types .itype { width: 158px; }
.types .stype { width: 187px; }

.gridwrap { display: flex; font-size: 22px; }
.items { flex: 1; width: 0; table-layout: fixed; border-collapse: collapse; background: #fff; }
.items th, .items td { border: 2px solid #d0d0d0; padding: 0 4px 2px; height: 34px; text-align: left; font-weight: 400; white-space: nowrap; overflow: hidden; line-height: 27px; }
.items th { height: 43px; padding: 0 0 8px 8px; background: #e5e5e5; color: #444; }
.items td:first-child { background: #e5e5e5; padding-left: 7px; color: #444; }
.items .num { text-align: right; padding-right: 8px; }
.items .current { background: #ffee9c; padding: 0; }
.items .pick { padding: 0; }
.items select { display: block; width: 100%; height: 30px; }
.c-num { width: 38px; }
.c-type { width: 186px; }
.c-item { width: 217px; }
.c-qty { width: 194px; }
.c-uomc { width: 217px; }
.c-uomn { width: 186px; }
.c-whse { width: 221px; }
.c-unit { width: 98px; }
.cell { display: flex; align-items: center; height: 30px; padding: 0 2px; }
.cell.whse { gap: 10px; padding-bottom: 2px; }
.cell .dot { margin: 0 0 0 auto; }
.selected { width: 80px; height: 28px; margin-left: 12px; padding: 0 0 2px 1px; background: #0078d7; color: #fff; }

.side { display: flex; flex-direction: column; width: 39px; }
.expand { width: 26px; height: 26px; background: none; }
.expand svg { width: 26px; height: 26px; }
.vscroll { flex: 1; display: flex; flex-direction: column; justify-content: space-between; margin-top: 16px; padding: 2px; border: 2px solid #bcbcbc; border-left-width: 0; }
.vscroll button, .hscroll button { display: grid; place-items: center; width: 33px; height: 32px; background: #e1e1e1; }
.vscroll svg { width: 18px; height: 9px; }
.hscroll { display: flex; align-items: center; justify-content: space-between; height: 39px; margin: 0 39px 0 38px; padding: 0 2px 0 0; border: 2px solid #b4b4b4; border-top-width: 1px; }
.hscroll svg { width: 8px; height: 18px; }
.thumb { display: grid; place-items: center; width: 57%; height: 35px; margin-right: auto; border: 2px solid #b0b0b0; background: #e0e0e0; }
.thumb svg { width: 16px; height: 14px; }

/* footer of the document */
.foot { display: flex; justify-content: space-between; margin: 6px 2px 0 -4px; }
.people .lbl { width: 287px; }
.people .field { width: 337px; }
.people .row { margin-bottom: 2px; }
.people .remarks { height: 130px; margin: 103px 0 0; font-size: 22px; }
.people .remarks .lbl { height: 130px; padding-top: 2px; align-items: flex-start; }
.people .remarks .field { height: 130px; padding: 0 5px; resize: none; overflow: hidden; }
.totals { margin-top: 10px; }
.totals .lbl { width: 276px; }
.totals .field { width: 318px; text-align: right; padding: 0; }
.totals .disc { width: 156px; }
.totals .pct { width: 80px; }
.totals .unit { width: 40px; padding-left: 8px; }
.totals .bare { justify-content: flex-start; gap: 12px; border-bottom-color: transparent; }
input[type="checkbox"] { appearance: none; width: 27px; height: 27px; border: 2px solid #8d9299; background: #fff; }

.actions { display: flex; margin: 51px 1px 0 -4px; }
.btn {
  height: 42px;
  border: 2px solid #7a7768;
  background: linear-gradient(#f9eab8, #f3d36a 50%, #f1ce5c);
  color: #3b3a30;
}
.btn.split { display: flex; align-items: center; width: 196px; margin-right: 13px; }
.btn.split span { flex: 1; height: 34px; line-height: 34px; border-right: 2px solid #a8986a; }
.btn.split::after, .btn.more::after { content: ""; border: solid transparent; border-width: 0 0 9px 9px; border-bottom-color: #2b2b33; }
.btn.split::after { margin: 16px 7px 0 8px; }
.btn.cancel { width: 150px; margin-right: auto; }
.btn.copy { width: 233px; margin-left: 9px; }
.btn.more { display: flex; align-items: center; padding-left: 48px; }
.btn.more::after { margin: 16px 4px 0 auto; }
.btn:disabled { background: linear-gradient(#fafafa, #dedede 50%, #d6d6d6); border-color: #cfcfcf; color: #979797; }

/* status bar */
.statusbar {
  position: relative;
  display: flex;
  height: 90px;
  padding: 15px 3px 0 10px;
  border: solid #b8b8b8;
  border-width: 0 0 0 4px;
  box-shadow: 0 -2px #d2d2d2;
  border-radius: 0 0 14px 14px;
  background: linear-gradient(#fff 4px, #d4d4d4 5px, #d9d9d9 12px, #fff 40px);
}
.status { flex: 1; min-width: 0; }
.boxes { display: flex; align-items: flex-start; height: 37px; }
.box { height: 28px; border: 2px solid #c6c9c9; border-radius: 3px; background: #e6e6e6; }
.box.wide { flex: 864; }
.box.mid { flex: 429; margin-right: 8px; }
.box.mid:last-child { flex: 424; margin-right: 0; }
.boxes time { flex: 197; text-align: center; line-height: 22px; }
.error { display: flex; align-items: center; height: 31px; background: #cc0000; color: #fff; font-size: 23px; }
.error svg { width: 24px; height: 26px; margin: 0 9px 0 11px; }
.error p { height: 31px; padding-left: 5px; border-left: 2px solid #fff; line-height: 31px; white-space: nowrap; overflow: hidden; }
.logo { display: flex; width: 240px; margin-top: 9px; padding-left: 50px; gap: 4px; color: #999; font-family: "Liberation Sans", Arial, sans-serif; }
.logo b { font-size: 44px; line-height: 42px; -webkit-text-stroke: 3px #999; }
.logo div { display: flex; flex-direction: column; }
.logo span { font-size: 20px; line-height: 16px; }
.logo strong { color: #f0ab1f; font-size: 29px; line-height: 30px; }
.grip { align-self: flex-end; width: 26px; height: 26px; margin-bottom: 6px; }
.marker { position: absolute; left: 1px; right: 472px; top: 19px; bottom: -5px; border: 6px solid #0000ff; border-radius: 3px; }
```
